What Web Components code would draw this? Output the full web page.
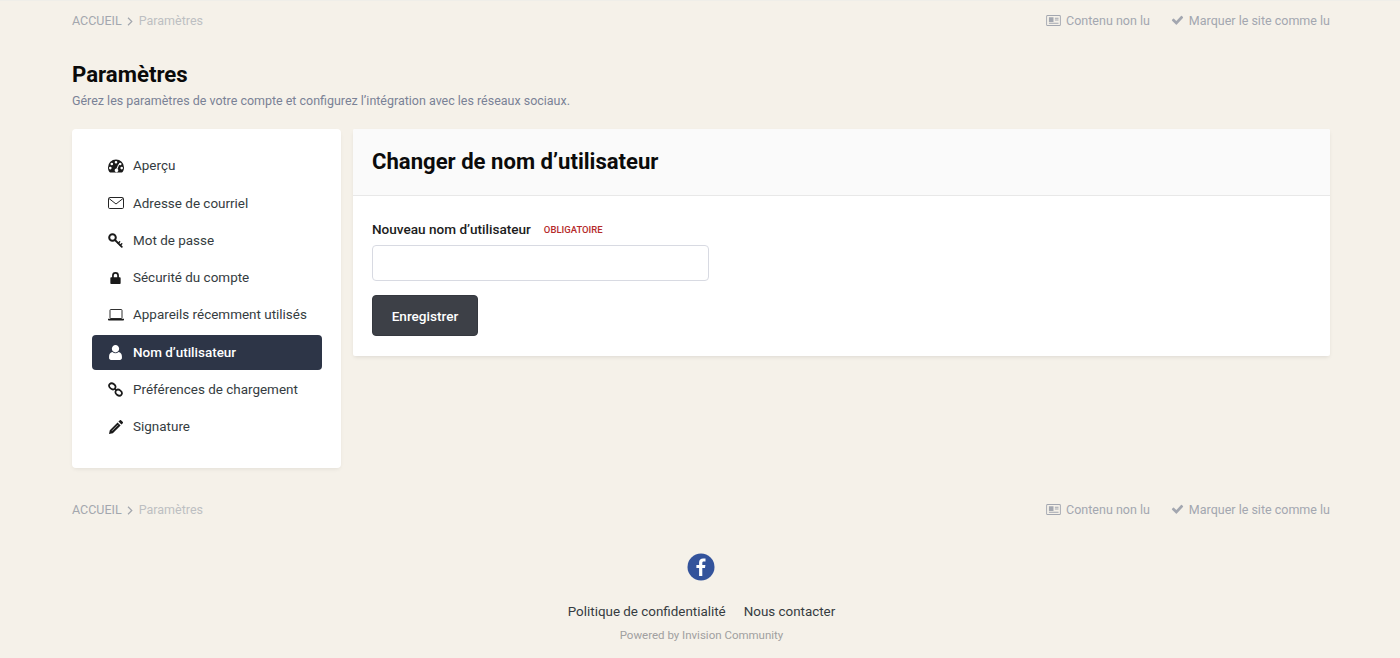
<!DOCTYPE html>
<html lang="fr">
<head>
<meta charset="utf-8">
<title>Paramètres</title>
<style>
  html, body { margin: 0; padding: 0; }
  body {
    background: #f5f1e9;
    color: #333;
    font-family: Roboto, "Liberation Sans", sans-serif;
    font-size: 14px;
  }
</style>
</head>
<body>

<template id="tpl-crumb-bar">
  <style>
    :host {
      display: flex;
      justify-content: space-between;
      align-items: center;
      height: 20px;
      font-size: 12.5px;
      color: #9aa0ab;
    }
    .left, .right { display: flex; align-items: center; }
    .home { color: #a3a7ae; }
    .sep { width: 17px; text-align: center; color: #a3a7ae; }
    .sep svg { display: inline-block; vertical-align: -1px; }
    .cur { color: #bdbfc2; }
    .item { display: flex; align-items: center; color: #a3a7b0; }
    .item + .item { margin-left: 21px; }
    ui-icon { margin-right: 5px; }
  </style>
  <div class="left">
    <span class="home">ACCUEIL</span>
    <span class="sep"><svg width="6" height="9" viewBox="0 0 6 9" fill="none" stroke="#a3a7ae" stroke-width="1.2"><path d="M1 .8 4.800 4.500 1 8.200"/></svg></span>
    <span class="cur">Paramètres</span>
  </div>
  <div class="right">
    <span class="item"><ui-icon name="news" w="15" h="11"></ui-icon>Contenu non lu</span>
    <span class="item"><ui-icon name="check" w="13" h="10"></ui-icon>Marquer le site comme lu</span>
  </div>
</template>

<template id="tpl-nav-item">
  <style>
    :host {
      display: flex;
      align-items: center;
      box-sizing: border-box;
      height: 35.3px;
      margin-bottom: 2px;
      padding: 0 0 .6px 15.5px;
      border-radius: 4px;
      font-size: 13.46px;
      color: #353c41;
    }
    :host([active]) {
      background: #2d3547;
      color: #fff;
      font-weight: 500;
    }
    .ico {
      width: 16px;
      margin-right: 9.5px;
      display: flex;
      justify-content: center;
      color: #1a1a1a;
    }
    :host([active]) .ico { color: #fff; }
  </style>
  <span class="ico"></span>
  <slot></slot>
</template>

<template id="tpl-side-nav">
  <style>
    :host {
      display: block;
      box-sizing: border-box;
      width: 269px;
      height: 339px;
      flex: none;
      padding: 19.4px 19px 0 20px;
      background: #fff;
      border-radius: 4px;
      box-shadow: 0 2px 4px -1px rgba(0,0,0,.08);
    }
  </style>
  <slot></slot>
</template>

<template id="tpl-name-form">
  <style>
    :host {
      display: block;
      flex: 1;
      height: 227px;
      background: #fff;
      border-radius: 2px;
      box-shadow: 0 2px 4px -1px rgba(0,0,0,.1);
      overflow: hidden;
    }
    header {
      box-sizing: border-box;
      height: 67px;
      padding: 0 19px 2px;
      display: flex;
      align-items: center;
      background: #fafafa;
      border-bottom: 1px solid #e8e8e8;
    }
    h2 {
      margin: 0;
      font-size: 22.1px;
      font-weight: 700;
      color: #0b0b0b;
    }
    .body { padding: 24px 19px 0; }
    .label {
      display: flex;
      align-items: center;
      height: 18px;
      font-size: 13.57px;
      font-weight: 500;
      color: #1c1c1c;
    }
    .req {
      margin-left: 13px;
      font-size: 9.5px;
      font-weight: 500;
      color: #b52a2a;
      text-transform: uppercase;
    }
    .input {
      box-sizing: border-box;
      width: 337px;
      height: 36px;
      margin-top: 7px;
      background: #fff;
      border: 1px solid #d8dae2;
      border-radius: 4px;
    }
    .btn {
      box-sizing: border-box;
      display: flex;
      align-items: center;
      justify-content: center;
      width: 106px;
      height: 41px;
      margin-top: 14px;
      background: #3d4047;
      border: 1px solid #35383f;
      border-radius: 4px;
      color: #fff;
      font-size: 13.6px;
      font-weight: 500;
    }
  </style>
  <header><h2>Changer de nom d’utilisateur</h2></header>
  <div class="body">
    <div class="label">Nouveau nom d’utilisateur<span class="req">Obligatoire</span></div>
    <div class="input"></div>
    <div class="btn">Enregistrer</div>
  </div>
</template>

<template id="tpl-site-footer">
  <style>
    :host {
      display: flex;
      flex-direction: column;
      align-items: center;
    }
    .links { display: flex; gap: 18px; margin-top: 23px; padding-left: 1px; font-size: 13.4px; color: #353c41; }
    .power { margin-top: 9px; padding-left: 1px; font-size: 11.5px; color: #a0a0a0; }
    svg { display: block; }
  </style>
  <svg width="28" height="28" viewBox="0 0 28 28">
    <circle cx="14" cy="14" r="13.5" fill="#33539b"/>
    <path fill="#fff" d="M15.300 23v-8h2.700l.4-3.100h-3.100v-2c0-.9.300-1.500 1.500-1.500h1.700V5.600c-.3 0-1.300-.1-2.400-.1-2.400 0-4 1.500-4 4.100v2.300H9.400V15h2.700v8z"/>
  </svg>
  <div class="links"><span>Politique de confidentialité</span><span>Nous contacter</span></div>
  <div class="power">Powered by Invision Community</div>
</template>

<template id="tpl-page-head">
  <style>
    :host { display: block; }
    h1 { margin: 0; font-size: 22.2px; line-height: 28px; font-weight: 700; color: #0a0a0a; }
    p { margin: 4px 0 0; font-size: 12.47px; line-height: 18px; color: #7a8296; }
  </style>
  <h1><slot name="title"></slot></h1>
  <p><slot name="desc"></slot></p>
</template>

<template id="tpl-app-shell">
  <style>
    :host {
      display: block;
      box-sizing: border-box;
      height: 658px;
      padding: 9px 70px 0 72px;
      border-top: 1px solid #efeee9;
    }
    .head { margin-top: 30px; }
    .cols { display: flex; gap: 12px; align-items: flex-start; margin-top: 19px; }
    .bottom { margin-top: 31px; }
    .foot { margin-top: 34px; }
  </style>
  <crumb-bar></crumb-bar>
  <div class="head">
    <page-head>
      <span slot="title">Paramètres</span>
      <span slot="desc">Gérez les paramètres de votre compte et configurez l’intégration avec les réseaux sociaux.</span>
    </page-head>
  </div>
  <div class="cols">
    <side-nav>
      <nav-item icon="gauge" w="16" h="14">Aperçu</nav-item>
      <nav-item icon="mail" w="16" h="12">Adresse de courriel</nav-item>
      <nav-item icon="key" w="15" h="15">Mot de passe</nav-item>
      <nav-item icon="lock" w="11" h="12">Sécurité du compte</nav-item>
      <nav-item icon="laptop" w="16" h="12">Appareils récemment utilisés</nav-item>
      <nav-item icon="user" w="13" h="15" active>Nom d’utilisateur</nav-item>
      <nav-item icon="link" w="15" h="15">Préférences de chargement</nav-item>
      <nav-item icon="pencil" w="14" h="14">Signature</nav-item>
    </side-nav>
    <name-form></name-form>
  </div>
  <div class="bottom"><crumb-bar></crumb-bar></div>
  <div class="foot"><site-footer></site-footer></div>
</template>

<app-shell></app-shell>

<script>
  const ICONS = {
    news: ['0 0 16 12', '<path fill-rule="evenodd" d="M1.5 0h13A1.500 1.500 0 0 1 16 1.500v9a1.500 1.500 0 0 1-1.500 1.500h-13A1.500 1.500 0 0 1 0 10.500v-9A1.500 1.500 0 0 1 1.500 0zM1.500 1a.5.5 0 0 0-.5.5v9a.5.5 0 0 0 .5.5h13a.5.5 0 0 0 .5-.5v-9a.5.5 0 0 0-.5-.5zM3 2.500h5v5H3zM9.500 3h4v1h-4zM9.500 5h4v1h-4zM3 8.500h10.500v1H3z"/>'],
    check: ['0 0 14 12', '<path d="M5.100 11.400.5 6.800a.8.8 0 0 1 0-1.100L1.700 4.500a.8.8 0 0 1 1.100 0l2.800 2.800L11.200 1.300a.8.8 0 0 1 1.100 0l1.200 1.200a.8.8 0 0 1 0 1.100L6.200 11.400a.8.8 0 0 1-1.100 0z"/>'],
    gauge: ['0 0 16 14', '<path fill-rule="evenodd" d="M8 .5a8 8 0 0 0-8 8c0 1.700.5 3.300 1.400 4.500.2.300.5.500.9.500h11.400c.4 0 .7-.2.900-.5.900-1.200 1.400-2.800 1.400-4.500a8 8 0 0 0-8-8zM8 2a1.300 1.300 0 1 1 0 2.600A1.300 1.300 0 0 1 8 2zM3.800 3.700a1.300 1.300 0 1 1 0 2.600 1.300 1.300 0 0 1 0-2.600zM12.200 3.700a1.300 1.300 0 1 1 0 2.600 1.300 1.300 0 0 1 0-2.600zM2.300 7.800a1.300 1.300 0 1 1 0 2.600 1.300 1.300 0 0 1 0-2.600zM13.700 7.800a1.300 1.300 0 1 1 0 2.600 1.300 1.300 0 0 1 0-2.600zM10.300 5.200l.9.400L9.500 9.900a1.800 1.800 0 1 1-1-.3z"/>'],
    mail: ['0 0 16 12', '<g fill="none" stroke="currentColor" stroke-width=".95"><rect x=".5" y=".5" width="15" height="11" rx="1.2"/><path d="M1 1.500 8 7l7-5.500"/></g>'],
    key: ['0 0 15 15', '<g fill="none" stroke="currentColor" stroke-linecap="round"><circle cx="4.500" cy="4.500" r="3.300" stroke-width="2"/><path stroke-width="1.800" d="M7 7l6.800 6.800"/><path stroke-width="1.400" d="M10.200 10.200l1.500-1.500M12.300 12.300l1.500-1.500"/></g>'],
    lock: ['0 0 12 14', '<path fill-rule="evenodd" d="M6 0a4 4 0 0 1 4 4v2h.800c.7 0 1.200.5 1.200 1.200v5.600c0 .7-.5 1.200-1.200 1.200H1.200C.5 14 0 13.500 0 12.800V7.200C0 6.500.5 6 1.200 6H2V4a4 4 0 0 1 4-4zM6 2a2 2 0 0 0-2 2v2h4V4a2 2 0 0 0-2-2z"/>'],
    laptop: ['0 0 16 12', '<rect x="2" y=".5" width="12" height="9" rx=".8" fill="none" stroke="currentColor" stroke-width=".9"/><path d="M0 9.800h16v.6c0 .6-.5 1.100-1.100 1.100H1.100C.5 11.500 0 11 0 10.400z"/>'],
    user: ['0 0 12 14', '<path d="M6 0a3.400 3.400 0 0 1 3.400 3.600C9.400 5.500 8 7 6 7S2.600 5.500 2.600 3.600A3.400 3.400 0 0 1 6 0zM3.200 6.600C4 7.400 5 7.800 6 7.800s2-.4 2.800-1.200c2 .3 3.200 2 3.200 4.200v1.400c0 1-.8 1.800-1.800 1.800H1.800C.8 14 0 13.200 0 12.200v-1.400c0-2.200 1.200-3.900 3.200-4.200z"/>'],
    link: ['0 0 15 15', '<g fill="none" stroke="currentColor" stroke-width="1.700"><ellipse rx="3.400" ry="2.700" transform="translate(4.300 4.300) rotate(40)"/><ellipse rx="3.400" ry="2.700" transform="translate(10.700 10.700) rotate(40)"/><path d="M6.500 6.500l2 2"/></g>'],
    pencil: ['0 0 14 14', '<path d="M0 14l.8-3.800L8.600 2.400l3 3-7.800 7.800zM9.400 1.600 10.600.4a1.200 1.200 0 0 1 1.700 0l1.300 1.300a1.200 1.200 0 0 1 0 1.700l-1.200 1.200z"/><path d="M3 10.800 9 4.800" stroke="#fff" stroke-width=".6"/>']
  };

  class UiIcon extends HTMLElement {
    constructor() {
      super();
      this.attachShadow({mode: 'open'});
    }
    connectedCallback() {
      const [box, body] = ICONS[this.getAttribute('name')];
      const w = this.getAttribute('w');
      const h = this.getAttribute('h');
      this.shadowRoot.innerHTML = `<style>:host{display:inline-flex}svg{display:block;fill:currentColor}</style>
        <svg width="${w}" height="${h}" viewBox="${box}">${body}</svg>`;
    }
  }
  customElements.define('ui-icon', UiIcon);

  function plain(name, tplId) {
    customElements.define(name, class extends HTMLElement {
      constructor() {
        super();
        this.attachShadow({mode: 'open'});
        this.shadowRoot.appendChild(document.getElementById(tplId).content.cloneNode(true));
      }
    });
  }
  plain('crumb-bar', 'tpl-crumb-bar');
  plain('side-nav', 'tpl-side-nav');
  plain('name-form', 'tpl-name-form');
  plain('site-footer', 'tpl-site-footer');
  plain('page-head', 'tpl-page-head');

  class NavItem extends HTMLElement {
    constructor() {
      super();
      this.attachShadow({mode: 'open'});
      this.shadowRoot.appendChild(document.getElementById('tpl-nav-item').content.cloneNode(true));
    }
    connectedCallback() {
      const icon = document.createElement('ui-icon');
      for (const [to, from] of [['name', 'icon'], ['w', 'w'], ['h', 'h']]) {
        icon.setAttribute(to, this.getAttribute(from));
      }
      this.shadowRoot.querySelector('.ico').appendChild(icon);
    }
  }
  customElements.define('nav-item', NavItem);

  plain('app-shell', 'tpl-app-shell');
</script>
</body>
</html>
